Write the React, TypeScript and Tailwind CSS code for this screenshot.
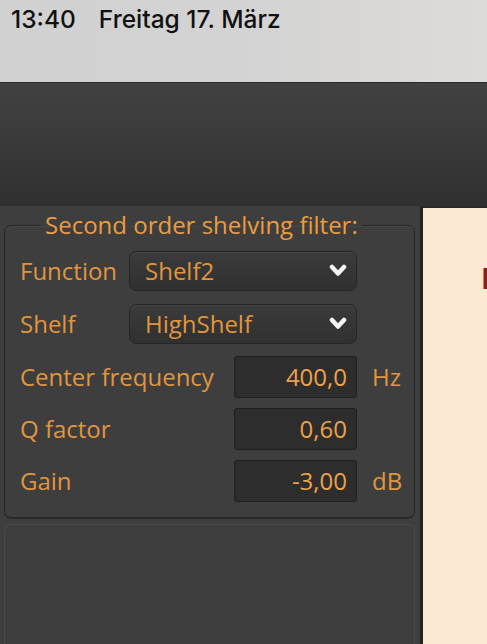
const label = "font-['Open_Sans',sans-serif] text-[24px] leading-none text-[#e0953f]";

const Combo = ({ value }: { value: string }) => (
  <div className="ml-auto mr-[57px] flex h-[40px] w-[228px] items-center justify-between rounded-[7px] border border-[#252525] bg-gradient-to-b from-[#3b3b3b] to-[#303030] pl-[15px] pr-[7px] shadow-[inset_0_1px_0_rgba(255,255,255,0.06)]">
    <span className={label + ' text-[#e89a40]'}>{value}</span>
    <svg width="22" height="14" viewBox="0 0 22 14" className="mt-[1px]">
      <polyline points="5,3 11,9.5 17,3" fill="none" stroke="#f4f4f4" strokeWidth="4.5" strokeLinecap="round" strokeLinejoin="round" />
    </svg>
  </div>
);

const NumField = ({ value, unit }: { value: string; unit?: string }) => (
  <div className="ml-auto flex items-center">
    <div className="flex h-[42px] w-[123px] items-center justify-end rounded-[3px] border border-[#1f1f1f] bg-[#2d2d2d] pr-[9px]">
      <span className={label + ' text-[#eda14a]'}>{value}</span>
    </div>
    <span className={label + ' ml-[15px] w-[42px]'}>{unit}</span>
  </div>
);

export default function App() {
  return (
    <div className="flex h-[644px] w-[487px] flex-col overflow-hidden bg-[#3e3e3e]">
      {/* status bar */}
      <div className="h-[82px] shrink-0 bg-gradient-to-r from-[#d1d1d1] via-[#d3d3d3] to-[#dddbd7] px-[11px] pt-[3px] font-['Inter',sans-serif] text-[24.5px] font-medium leading-[32px] text-[#111]">
        <span>13:40</span>
        <span className="ml-[23px]">Freitag 17. März</span>
      </div>

      {/* toolbar area */}
      <div className="h-[124px] shrink-0 border-t border-[#2a2a2a] bg-gradient-to-b from-[#414141] via-[#3a3a3a] to-[#303030]" />

      <div className="flex flex-1">
        {/* left panel */}
        <div className="w-[420px] shrink-0 bg-[#3e3e3e] pl-[4px] pr-[5px]">
          <fieldset className="mt-[5px] rounded-[7px] border border-[#262626] pb-[10px] pl-[15px] pr-0 shadow-[inset_0_1px_0_rgba(255,255,255,0.05),0_1px_0_rgba(0,0,0,0.3)]">
            <legend className={label + ' ml-[21px] px-[4px] py-[2px] text-[#eb9c40]'}>Second order shelving filter:</legend>
            <div className="pt-[5px]">
              <div className="flex h-[53px] items-center">
                <span className={label}>Function</span>
                <Combo value="Shelf2" />
              </div>
              <div className="flex h-[53px] items-center">
                <span className={label}>Shelf</span>
                <Combo value="HighShelf" />
              </div>
              <div className="flex h-[53px] items-center">
                <span className={label}>Center frequency</span>
                <NumField value="400,0" unit="Hz" />
              </div>
              <div className="flex h-[52px] items-center">
                <span className={label}>Q factor</span>
                <NumField value="0,60" />
              </div>
              <div className="flex h-[52px] items-center">
                <span className={label}>Gain</span>
                <NumField value="-3,00" unit="dB" />
              </div>
            </div>
          </fieldset>
          <div className="mt-[6px] h-[120px] rounded-t-[6px] border-x border-t border-[#494949]" />
        </div>

        {/* separator */}
        <div className="w-[3px] shrink-0 bg-[#242424]" />

        {/* right panel */}
        <div className="flex-1 overflow-hidden border-t-2 border-[#2a2a2a] bg-[#fbe9d3] pl-[58px] pt-[56px]">
          <span className="font-['Open_Sans',sans-serif] text-[28px] font-bold leading-none text-[#8a1d1d]">F</span>
        </div>
      </div>
    </div>
  );
}
